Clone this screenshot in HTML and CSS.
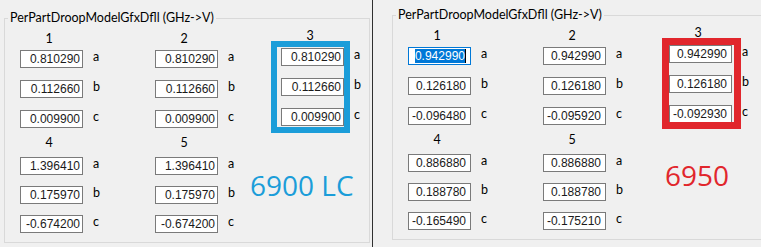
FILE: index.html
```html
<!DOCTYPE html>
<html>
<head>
<meta charset="utf-8">
<link rel="stylesheet" href="styles.css">
</head>
<body>
<div class="screen">
  <section class="win win-left">
    <fieldset class="group">
      <legend>PerPartDroopModelGfxDfll (GHz-&gt;V)</legend>
      <div class="grp-body">
        <div class="section">
          <div class="col col-1">
            <div class="hdr">1</div>
            <div class="row"><span class="tb">0.810290</span><span class="lbl">a</span></div>
            <div class="row"><span class="tb">0.112660</span><span class="lbl">b</span></div>
            <div class="row"><span class="tb">0.009900</span><span class="lbl">c</span></div>
          </div>
          <div class="col col-2">
            <div class="hdr">2</div>
            <div class="row"><span class="tb">0.810290</span><span class="lbl">a</span></div>
            <div class="row"><span class="tb">0.112660</span><span class="lbl">b</span></div>
            <div class="row"><span class="tb">0.009900</span><span class="lbl">c</span></div>
          </div>
          <div class="col col-3">
            <div class="hdr">3</div>
            <div class="row"><span class="tb">0.810290</span><span class="lbl">a</span></div>
            <div class="row"><span class="tb">0.112660</span><span class="lbl">b</span></div>
            <div class="row"><span class="tb">0.009900</span><span class="lbl">c</span></div>
          </div>
        </div>
        <div class="section section-2">
          <div class="col col-1">
            <div class="hdr">4</div>
            <div class="row"><span class="tb">1.396410</span><span class="lbl">a</span></div>
            <div class="row"><span class="tb">0.175970</span><span class="lbl">b</span></div>
            <div class="row"><span class="tb">-0.674200</span><span class="lbl">c</span></div>
          </div>
          <div class="col col-2">
            <div class="hdr">5</div>
            <div class="row"><span class="tb">1.396410</span><span class="lbl">a</span></div>
            <div class="row"><span class="tb">0.175970</span><span class="lbl">b</span></div>
            <div class="row"><span class="tb">-0.674200</span><span class="lbl">c</span></div>
          </div>
          <div class="tag tag-blue">6900 LC</div>
        </div>
      </div>
    </fieldset>
    <div class="frame frame-blue"></div>
  </section>
  <div class="divider"></div>
  <section class="win win-right">
    <fieldset class="group">
      <legend>PerPartDroopModelGfxDfll (GHz-&gt;V)</legend>
      <div class="grp-body">
        <div class="section">
          <div class="col col-1">
            <div class="hdr">1</div>
            <div class="row"><span class="tb tb-focus"><span class="sel">0.942990</span><span class="caret"></span></span><span class="lbl">a</span></div>
            <div class="row"><span class="tb">0.126180</span><span class="lbl">b</span></div>
            <div class="row"><span class="tb">-0.096480</span><span class="lbl">c</span></div>
          </div>
          <div class="col col-2">
            <div class="hdr">2</div>
            <div class="row"><span class="tb">0.942990</span><span class="lbl">a</span></div>
            <div class="row"><span class="tb">0.126180</span><span class="lbl">b</span></div>
            <div class="row"><span class="tb">-0.095920</span><span class="lbl">c</span></div>
          </div>
          <div class="col col-3">
            <div class="hdr">3</div>
            <div class="row"><span class="tb">0.942990</span><span class="lbl">a</span></div>
            <div class="row"><span class="tb">0.126180</span><span class="lbl">b</span></div>
            <div class="row"><span class="tb">-0.092930</span><span class="lbl">c</span></div>
          </div>
        </div>
        <div class="section section-2">
          <div class="col col-1">
            <div class="hdr">4</div>
            <div class="row"><span class="tb">0.886880</span><span class="lbl">a</span></div>
            <div class="row"><span class="tb">0.188780</span><span class="lbl">b</span></div>
            <div class="row"><span class="tb">-0.165490</span><span class="lbl">c</span></div>
          </div>
          <div class="col col-2">
            <div class="hdr">5</div>
            <div class="row"><span class="tb">0.886880</span><span class="lbl">a</span></div>
            <div class="row"><span class="tb">0.188780</span><span class="lbl">b</span></div>
            <div class="row"><span class="tb">-0.175210</span><span class="lbl">c</span></div>
          </div>
          <div class="tag tag-red">6950</div>
        </div>
      </div>
    </fieldset>
    <div class="frame frame-red"></div>
  </section>
</div>
</body>
</html>
```

FILE: styles.css
```css
html, body {
  margin: 0;
  padding: 0;
  background: #f0f0f0;
}

body {
  width: 761px;
  height: 247px;
  overflow: hidden;
  font-family: "Lato", "Noto Sans", sans-serif;
  font-size: 12.5px;
  color: #000;
}

.screen {
  display: flex;
  height: 247px;
  overflow: hidden;
}

.win {
  position: relative;
  flex: none;
  height: 247px;
  box-sizing: border-box;
  overflow: hidden;
}

.win-left {
  width: 372px;
  padding: 10px 0 0 4px;
}

.win-right {
  width: 388px;
  padding: 7px 0 0 19px;
}

.divider {
  flex: none;
  width: 1px;
  background: #303030;
}

.group {
  margin: 0;
  padding: 0;
  border: 1px solid #d9d9d9;
  min-width: 0;
  box-sizing: border-box;
}

.win-left .group {
  width: 366px;
}

.win-right .group {
  width: 420px;
}

.group legend {
  margin-left: 3px;
  padding: 0 2px;
  line-height: 16px;
  font-size: 12.5px;
}

.grp-body {
  padding: 0 0 9px 15px;
}

.section {
  display: flex;
  align-items: flex-start;
}

.col {
  display: flex;
  flex-direction: column;
  flex: none;
}

.col-1 {
  width: 135px;
}

.col-2 {
  width: 126px;
}

.win-left .section-2 .col-2 {
  width: 95px;
}

.win-right .section-2 .col-2 {
  width: 122px;
}

.hdr {
  width: 63px;
  padding-right: 5px;
  box-sizing: border-box;
  text-align: center;
  line-height: 16px;
  margin: 5px 0 3px;
}

.section-2 .hdr {
  margin: 7px 0 6px;
}

.col-3 .hdr {
  margin: 2px 0 4px;
}

.row {
  display: flex;
  align-items: flex-start;
  height: 18px;
}

.row + .row {
  margin-top: 12px;
}

.section-2 .row + .row {
  margin-top: 11px;
}

.tb {
  display: block;
  width: 63px;
  height: 18px;
  box-sizing: border-box;
  border: 1px solid #7a7a7a;
  background: #fff;
  font-family: "Liberation Sans", Arial, sans-serif;
  font-size: 12px;
  line-height: 16px;
  text-align: right;
  padding-right: 2px;
  white-space: nowrap;
  color: #1a1a1a;
}

.win-right .tb {
  padding-right: 4px;
}

.tb-focus {
  border-color: #0078d7;
}

.sel {
  background: #0078d7;
  color: #fff;
}

.caret {
  display: inline-block;
  width: 1px;
  height: 14px;
  background: #000;
  vertical-align: -3px;
}

.lbl {
  margin-left: 10px;
  line-height: 14px;
}

.tag {
  flex: none;
  font-family: "Open Sans", sans-serif;
  font-size: 28px;
  line-height: 38px;
  white-space: nowrap;
}

.tag-blue {
  color: #1b9dd9;
  margin-top: 38px;
}

.tag-red {
  color: #e1262c;
  margin-top: 31px;
}

.frame {
  position: absolute;
  box-sizing: border-box;
}

.frame-blue {
  left: 271px;
  top: 41px;
  width: 79px;
  height: 92px;
  border: 6px solid #1b9dd9;
}

.frame-red {
  left: 289px;
  top: 38px;
  width: 79px;
  height: 91px;
  border: 7px solid #e1262c;
}
```
